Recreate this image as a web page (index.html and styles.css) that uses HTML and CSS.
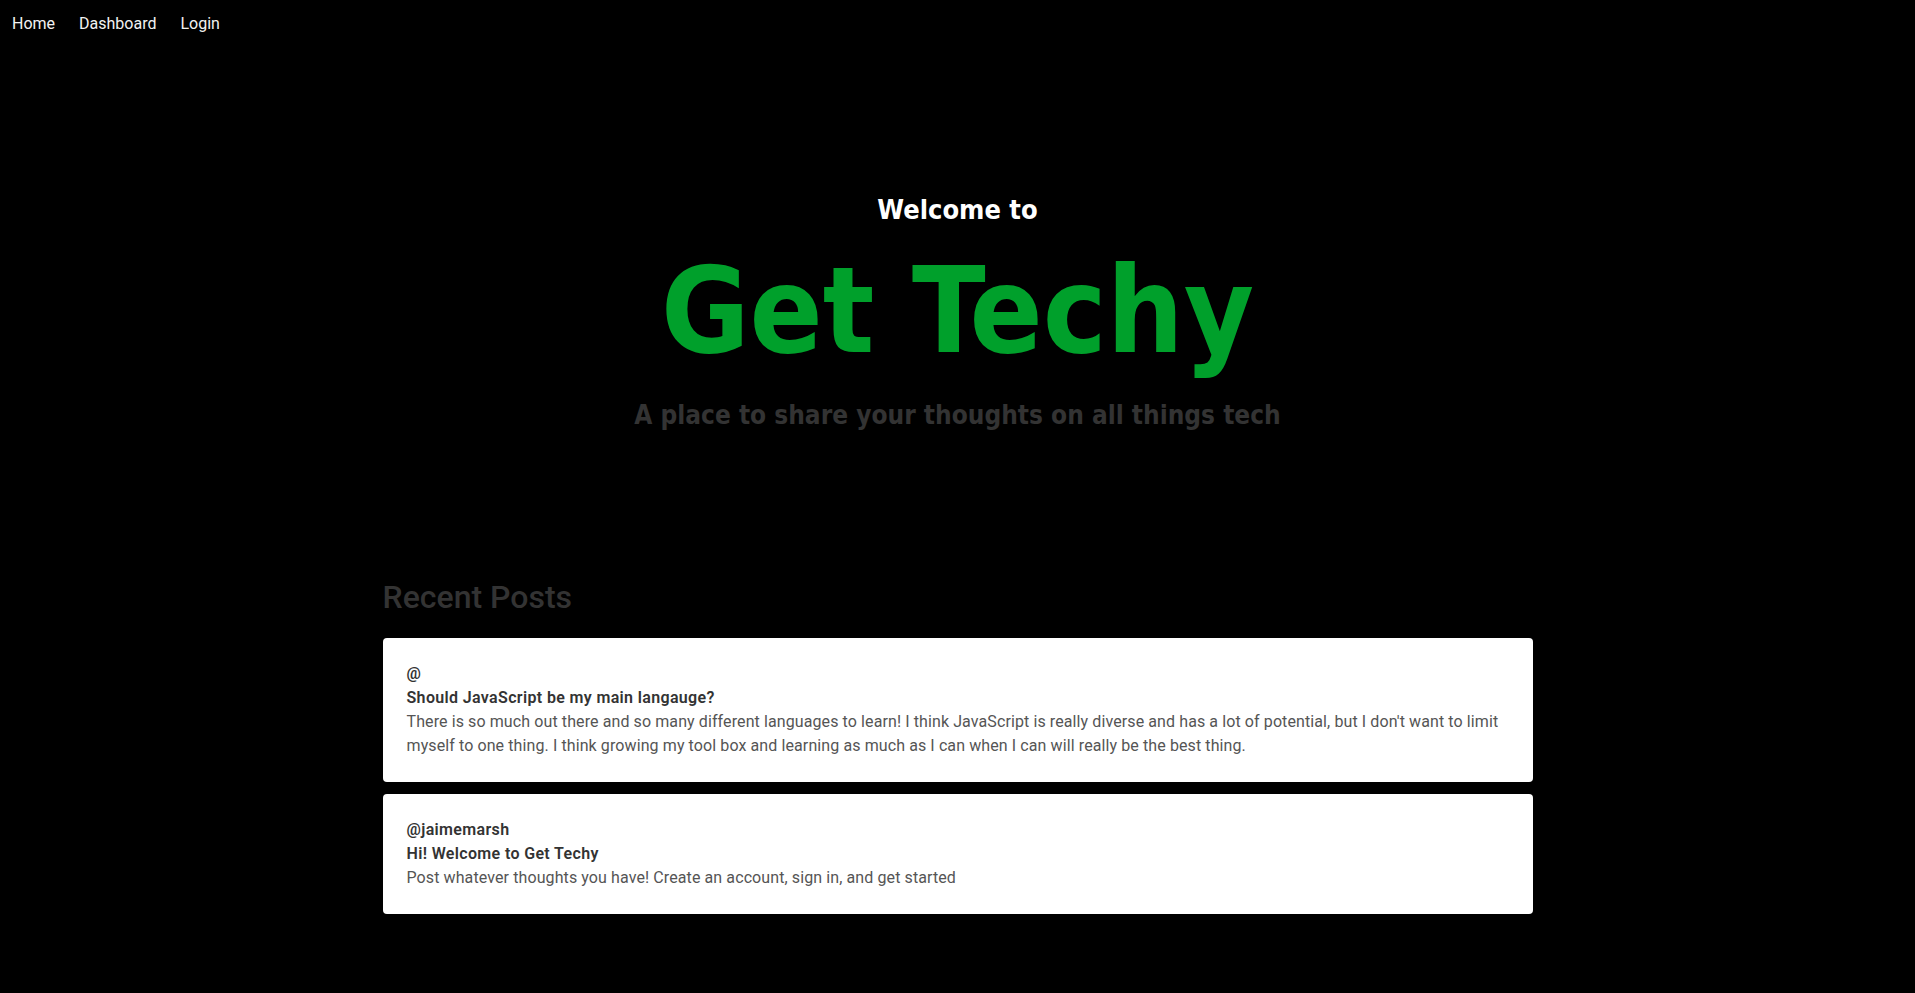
FILE: index.html
```html
<!DOCTYPE html>
<html lang="en">
<head>
<meta charset="utf-8">
<title>Get Techy</title>
<link rel="stylesheet" href="styles.css">
</head>
<body>
<nav class="nav">
  <a class="nav-link" href="#">Home</a>
  <a class="nav-link" href="#">Dashboard</a>
  <a class="nav-link" href="#">Login</a>
</nav>
<header class="hero">
  <h2 class="hero-welcome">Welcome to</h2>
  <h1 class="hero-title">Get Techy</h1>
  <p class="hero-sub">A place to share your thoughts on all things tech</p>
</header>
<main class="posts">
  <h3 class="posts-heading">Recent Posts</h3>
  <div class="post-list">
    <article class="post">
      <div class="post-user">@</div>
      <div class="post-title">Should JavaScript be my main langauge?</div>
      <div class="post-body">There is so much out there and so many different languages to learn! I think JavaScript is really diverse and has a lot of potential, but I don't want to limit myself to one thing. I think growing my tool box and learning as much as I can when I can will really be the best thing.</div>
    </article>
    <article class="post">
      <div class="post-user">@jaimemarsh</div>
      <div class="post-title">Hi! Welcome to Get Techy</div>
      <div class="post-body">Post whatever thoughts you have! Create an account, sign in, and get started</div>
    </article>
  </div>
</main>
</body>
</html>
```
FILE: styles.css
```css
html, body {
  margin: 0;
  padding: 0;
  background: #000;
}
body {
  font-family: Roboto, "Noto Sans", sans-serif;
  color: #fff;
  min-height: 993px;
}
.nav {
  display: flex;
  gap: 24px;
  padding: 13px 12px 11px;
  height: 22px;
  align-items: center;
}
.nav-link {
  color: #f2f2f2;
  text-decoration: none;
  font-size: 16px;
  line-height: 22px;
}
.hero {
  display: flex;
  flex-direction: column;
  align-items: center;
  padding-top: 146px;
  padding-bottom: 140px;
  text-align: center;
}
.hero-welcome {
  margin: 0;
  font-family: "DejaVu Sans Condensed", "Liberation Sans", sans-serif;
  font-weight: 700;
  font-size: 27px;
  line-height: 36px;
  color: #fff;
}
.hero-title {
  margin: 0;
  font-family: "DejaVu Sans Condensed", "Liberation Sans", sans-serif;
  font-weight: 700;
  font-size: 120px;
  line-height: 165px;
  color: #00a02b;
}
.hero-sub {
  margin: 0;
  font-family: "DejaVu Sans Condensed", "Liberation Sans", sans-serif;
  font-weight: 700;
  font-size: 26px;
  line-height: 44px;
  color: #333;
}
.posts {
  width: 1150px;
  margin: 0 auto;
  padding-bottom: 60px;
}
.posts-heading {
  margin: 0 0 21px;
  font-family: Roboto, sans-serif;
  font-weight: 500;
  font-size: 32px;
  line-height: 40px;
  color: #333;
}
.post-list {
  display: flex;
  flex-direction: column;
  gap: 12px;
}
.post {
  background: #fff;
  border-radius: 4px;
  padding: 24px;
  font-size: 16px;
  line-height: 24px;
  letter-spacing: 0.1px;
}
.post-user, .post-title {
  font-weight: 600;
  color: #333;
  letter-spacing: 0.35px;
}
.post-body {
  color: #555;
}
```
